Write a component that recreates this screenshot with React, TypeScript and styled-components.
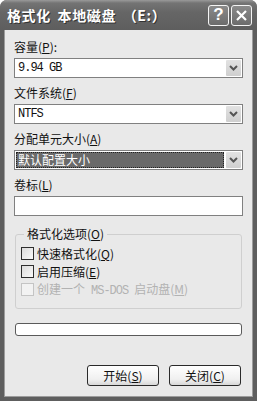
import styled, { createGlobalStyle } from 'styled-components';

const Global = createGlobalStyle`
  html, body {
    margin: 0;
    padding: 0;
    background: #fff;
  }
  body {
    font-family: "Noto Sans CJK SC", "Liberation Sans", sans-serif;
    font-size: 12px;
    color: #111;
  }
`;

const Window = styled.div`
  width: 257px;
  height: 401px;
  display: flex;
  flex-direction: column;
  border-radius: 7px 7px 0 0;
  overflow: hidden;
  background: #5e5e5e;
`;

const TitleBar = styled.div`
  height: 30px;
  flex: none;
  display: flex;
  align-items: center;
  padding: 0 5px 0 7px;
  background: linear-gradient(#9a9a9a 0, #747474 3px, #666 40%, #5e5e5e 100%);
`;

const Title = styled.div`
  flex: 1;
  color: #fff;
  font-size: 14px;
  font-weight: 700;
  letter-spacing: 0.6px;
  word-spacing: 3px;
  white-space: nowrap;
  text-shadow: 1px 1px 0 #333;
`;

const CapButtons = styled.div`
  display: flex;
  gap: 2px;
`;

const CapButton = styled.div`
  width: 19px;
  height: 19px;
  border: 1px solid #f4f4f4;
  border-radius: 3px;
  background: linear-gradient(#8a8a8a, #6c6c6c);
  display: flex;
  align-items: center;
  justify-content: center;
  color: #fff;
  font-family: "Liberation Sans", sans-serif;
  font-weight: 700;
  font-size: 17px;
`;

const Frame = styled.div`
  flex: 1;
  margin: 0 4px 4px 4px;
  background: #e9e9e9;
  box-shadow: inset 1px 0 0 #9c9c9c, inset -1px 0 0 #9c9c9c, inset 0 -1px 0 #9c9c9c;
  display: flex;
  flex-direction: column;
  padding: 9px 10px 0 10px;
`;

const Label = styled.div<{ $gap?: number }>`
  height: 16px;
  line-height: 16px;
  margin-top: ${({ $gap }) => $gap ?? 0}px;
  margin-bottom: 3px;
  white-space: nowrap;
`;

const U = styled.u`
  text-underline-offset: 1px;
`;

const SelectBox = styled.div`
  height: 20px;
  box-sizing: border-box;
  border: 1px solid #808080;
  background: #fff;
  display: flex;
  align-items: stretch;
  padding: 1px;
`;

const SelectText = styled.div<{ $selected?: boolean; $mono?: boolean }>`
  flex: 1;
  margin-right: 2px;
  padding-left: 2px;
  line-height: 16px;
  font-family: ${({ $mono }) =>
    $mono ? '"Liberation Mono", monospace' : '"Noto Sans CJK SC", sans-serif'};
  font-size: 12px;
  letter-spacing: ${({ $mono }) => ($mono ? '-1px' : '0')};
  color: ${({ $selected }) => ($selected ? '#fff' : '#111')};
  background: ${({ $selected }) => ($selected ? '#6a6a6a' : 'transparent')};
  outline: ${({ $selected }) => ($selected ? '1px dotted #222' : 'none')};
  outline-offset: -1px;
`;

const ArrowButton = styled.div`
  width: 15px;
  background: linear-gradient(#e2e2e2, #cfcfcf);
  border-radius: 1px;
  display: flex;
  align-items: center;
  justify-content: center;
`;

const TextField = styled.div`
  height: 20px;
  box-sizing: border-box;
  border: 1px solid #808080;
  background: #fff;
`;

const Group = styled.fieldset`
  margin: 10px 1px 0 1px;
  padding: 5px 0 12px 5px;
  border: 1px solid #cfcfcf;
  border-radius: 3px;
  display: flex;
  flex-direction: column;
  gap: 5px;
`;

const Legend = styled.legend`
  padding: 0 3px;
  margin-left: 3px;
  line-height: 16px;
`;

const CheckRow = styled.div<{ $disabled?: boolean }>`
  display: flex;
  align-items: center;
  gap: 3px;
  height: 13px;
  line-height: 13px;
  color: ${({ $disabled }) => ($disabled ? '#b2b2b2' : '#111')};
  white-space: nowrap;
`;

const Box = styled.div<{ $disabled?: boolean }>`
  width: 13px;
  height: 13px;
  flex: none;
  box-sizing: border-box;
  border: 1px solid ${({ $disabled }) => ($disabled ? '#c4c4c4' : '#2e2e2e')};
  background: ${({ $disabled }) =>
    $disabled ? '#f2f2f2' : 'linear-gradient(135deg, #dcdcdc, #fafafa)'};
`;

const Mono = styled.span`
  font-family: "Liberation Mono", monospace;
  font-size: 12px;
  letter-spacing: -1px;
  margin: 0 6px;
`;

const Progress = styled.div`
  margin: 14px 1px 0 1px;
  height: 13px;
  box-sizing: border-box;
  border: 1px solid #5a5a5a;
  border-radius: 3px;
  background: #fff;
`;

const ButtonRow = styled.div`
  margin-top: 29px;
  display: flex;
  justify-content: flex-end;
  gap: 10px;
  padding-right: 2px;
`;

const Button = styled.div`
  width: 72px;
  height: 21px;
  box-sizing: border-box;
  border: 1px solid #2a2a2a;
  border-radius: 3px;
  background: linear-gradient(#ffffff, #f0f0f0 70%, #d8d8d8);
  display: flex;
  align-items: center;
  justify-content: center;
  font-size: 12px;
`;

function Chevron() {
  return (
    <svg width="9" height="6" viewBox="0 0 9 6">
      <path d="M1 1 L4.5 4.5 L8 1" fill="none" stroke="#555" strokeWidth="2" />
    </svg>
  );
}

function Select({ value, selected, mono }: { value: string; selected?: boolean; mono?: boolean }) {
  return (
    <SelectBox>
      <SelectText $selected={selected} $mono={mono}>{value}</SelectText>
      <ArrowButton>
        <Chevron />
      </ArrowButton>
    </SelectBox>
  );
}

export default function App() {
  return (
    <>
      <Global />
      <Window>
        <TitleBar>
          <Title>格式化 本地磁盘 （E:）</Title>
          <CapButtons>
            <CapButton>?</CapButton>
            <CapButton>
              <svg width="13" height="13" viewBox="0 0 13 13">
                <path d="M2 2 L11 11 M11 2 L2 11" stroke="#fff" strokeWidth="2.2" />
              </svg>
            </CapButton>
          </CapButtons>
        </TitleBar>
        <Frame>
          <Label>
            容量(<U>P</U>):
          </Label>
          <Select value="9.94 GB" mono />
          <Label $gap={7}>
            文件系统(<U>F</U>)
          </Label>
          <Select value="NTFS" mono />
          <Label $gap={7}>
            分配单元大小(<U>A</U>)
          </Label>
          <Select value="默认配置大小" selected />
          <Label $gap={7}>
            卷标(<U>L</U>)
          </Label>
          <TextField />
          <Group>
            <Legend>
              格式化选项(<U>O</U>)
            </Legend>
            <CheckRow>
              <Box />
              <span>
                快速格式化(<U>Q</U>)
              </span>
            </CheckRow>
            <CheckRow>
              <Box />
              <span>
                启用压缩(<U>E</U>)
              </span>
            </CheckRow>
            <CheckRow $disabled>
              <Box $disabled />
              <span>
                创建一个<Mono>MS-DOS</Mono>启动盘(<U>M</U>)
              </span>
            </CheckRow>
          </Group>
          <Progress />
          <ButtonRow>
            <Button>
              开始(<U>S</U>)
            </Button>
            <Button>
              关闭(<U>C</U>)
            </Button>
          </ButtonRow>
        </Frame>
      </Window>
    </>
  );
}
